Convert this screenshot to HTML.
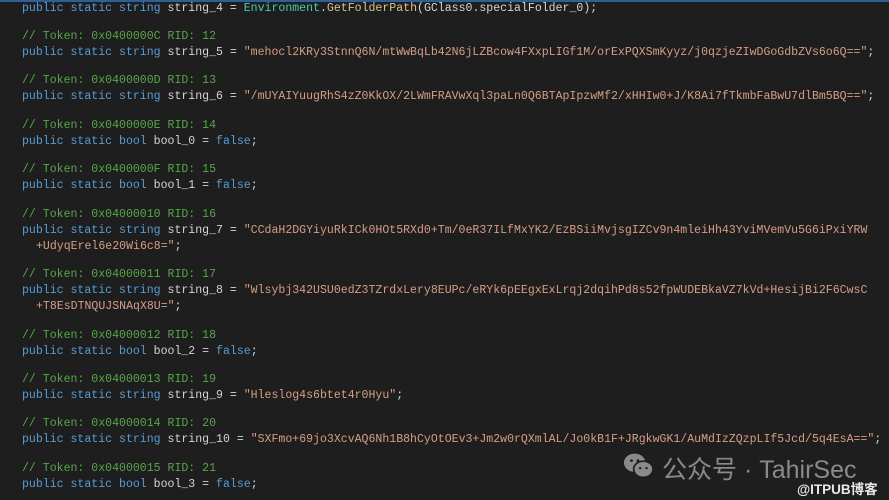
<!DOCTYPE html>
<html><head><meta charset="utf-8"><style>
html,body{margin:0;padding:0;}
body{width:889px;height:500px;background:#1e1e1e;position:relative;overflow:hidden;font-family:"Liberation Mono",monospace;font-size:11.55px;color:#d4d4d4;}
.top{position:absolute;left:0;top:0;width:889px;height:2px;background:#2f5f99;}
.l{position:absolute;left:22px;white-space:pre;line-height:14px;}
.k{color:#569cd6}.s{color:#d69d85}.c{color:#57a64a}.t{color:#4ec9b0}.m{color:#dcc28a}
.wm{position:absolute;left:662px;top:450px;font-family:"Liberation Sans","Noto Sans CJK SC",sans-serif;font-size:25px;color:#8a8a8a;white-space:nowrap;}
.wm2{position:absolute;left:797px;top:478px;font-family:"Liberation Sans","Noto Sans CJK SC",sans-serif;font-size:13.5px;font-weight:bold;color:#e8e8e8;white-space:nowrap;}
</style></head><body>
<div class="top"></div>
<div class="l" style="top:2px"><span class="k">public static string</span> string_4 = <span class="t">Environment</span>.<span class="m">GetFolderPath</span>(GClass0.specialFolder_0);</div>
<div class="l c" style="top:30px">// Token: 0x0400000C RID: 12</div>
<div class="l" style="top:46px"><span class="k">public static string</span> string_5 = <span class="s">"mehocl2KRy3StnnQ6N/mtWwBqLb42N6jLZBcow4FXxpLIGf1M/orExPQXSmKyyz/j0qzjeZIwDGoGdbZVs6o6Q=="</span>;</div>
<div class="l c" style="top:74px">// Token: 0x0400000D RID: 13</div>
<div class="l" style="top:90px"><span class="k">public static string</span> string_6 = <span class="s">"/mUYAIYuugRhS4zZ0KkOX/2LWmFRAVwXql3paLn0Q6BTApIpzwMf2/xHHIw0+J/K8Ai7fTkmbFaBwU7dlBm5BQ=="</span>;</div>
<div class="l c" style="top:119px">// Token: 0x0400000E RID: 14</div>
<div class="l" style="top:135px"><span class="k">public static bool</span> bool_0 = <span class="k">false</span>;</div>
<div class="l c" style="top:163px">// Token: 0x0400000F RID: 15</div>
<div class="l" style="top:179px"><span class="k">public static bool</span> bool_1 = <span class="k">false</span>;</div>
<div class="l c" style="top:208px">// Token: 0x04000010 RID: 16</div>
<div class="l" style="top:224px"><span class="k">public static string</span> string_7 = <span class="s">"CCdaH2DGYiyuRkICk0HOt5RXd0+Tm/0eR37ILfMxYK2/EzBSiiMvjsgIZCv9n4mleiHh43YviMVemVu5G6iPxiYRW</span></div>
<div class="l s" style="top:240px;left:36px">+UdyqErel6e20Wi6c8="<span style="color:#d4d4d4">;</span></div>
<div class="l c" style="top:268px">// Token: 0x04000011 RID: 17</div>
<div class="l" style="top:284px"><span class="k">public static string</span> string_8 = <span class="s">"Wlsybj342USU0edZ3TZrdxLery8EUPc/eRYk6pEEgxExLrqj2dqihPd8s52fpWUDEBkaVZ7kVd+HesijBi2F6CwsC</span></div>
<div class="l s" style="top:300px;left:36px">+T8EsDTNQUJSNAqX8U="<span style="color:#d4d4d4">;</span></div>
<div class="l c" style="top:329px">// Token: 0x04000012 RID: 18</div>
<div class="l" style="top:345px"><span class="k">public static bool</span> bool_2 = <span class="k">false</span>;</div>
<div class="l c" style="top:373px">// Token: 0x04000013 RID: 19</div>
<div class="l" style="top:389px"><span class="k">public static string</span> string_9 = <span class="s">"Hleslog4s6btet4r0Hyu"</span>;</div>
<div class="l c" style="top:417px">// Token: 0x04000014 RID: 20</div>
<div class="l" style="top:433px"><span class="k">public static string</span> string_10 = <span class="s">"SXFmo+69jo3XcvAQ6Nh1B8hCyOtOEv3+Jm2w0rQXmlAL/Jo0kB1F+JRgkwGK1/AuMdIzZQzpLIf5Jcd/5q4EsA=="</span>;</div>
<div class="l c" style="top:462px">// Token: 0x04000015 RID: 21</div>
<div class="l" style="top:478px"><span class="k">public static bool</span> bool_3 = <span class="k">false</span>;</div>
<svg style="position:absolute;left:622px;top:452px" width="34" height="28" viewBox="0 0 30 26"><ellipse cx="11" cy="10" rx="10" ry="8.5" fill="#8a8a8a"/><ellipse cx="19" cy="16" rx="9" ry="7.5" fill="#8a8a8a" stroke="#1e1e1e" stroke-width="1.5"/><circle cx="8" cy="8" r="1.3" fill="#1e1e1e"/><circle cx="14" cy="8" r="1.3" fill="#1e1e1e"/><circle cx="16" cy="15" r="1.1" fill="#1e1e1e"/><circle cx="22" cy="15" r="1.1" fill="#1e1e1e"/></svg>
<div class="wm">公众号 · TahirSec</div>
<div class="wm2">@ITPUB博客</div>
</body></html>
